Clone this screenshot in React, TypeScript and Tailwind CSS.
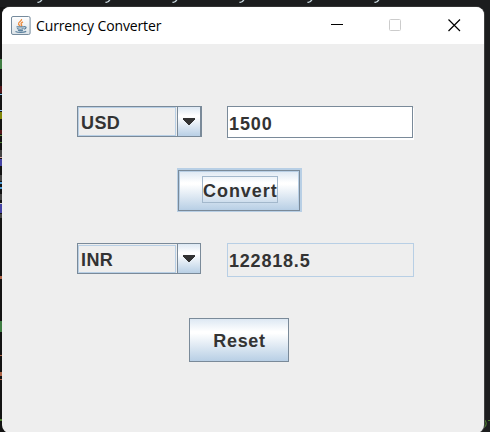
import React from "react";

const font = "font-['Liberation_Sans',Arial,sans-serif] font-bold text-[18px] leading-[20px] text-[#333333]";
const metal = "bg-[linear-gradient(180deg,#dde8f3_0%,#ffffff_30%,#ffffff_34%,#b8cfe5_100%)]";

function JavaIcon() {
  return (
    <svg width="20" height="20" viewBox="0 0 20 20" className="block">
      <defs>
        <linearGradient id="tile" x1="0" y1="0" x2="0" y2="1">
          <stop offset="0" stopColor="#ffffff" />
          <stop offset="1" stopColor="#dce3e8" />
        </linearGradient>
      </defs>
      <rect x="0.5" y="0.5" width="18.6" height="18" rx="1.5" fill="url(#tile)" stroke="#768b9d" />
      <path d="M10.5 3C11.5 5 7 6 7.5 8C7.8 9 9 9.5 9 10.3M12 5.8C9.5 7 9.8 8 10.6 8.8C11 9.3 10.5 10 10 10.4" fill="none" stroke="#ed8b3d" strokeWidth="1.3" />
      <path d="M5.5 10.8H13.2M6 12.5C7.5 13.3 11 13.3 12.6 12.5M7 14.2C8.5 14.8 10.5 14.8 12 14.2M13.2 10.7C16 10.4 15.4 12.8 13 13.2M4.5 15.4C7 16.8 12.5 16.8 15.2 15.4" fill="none" stroke="#5b819e" strokeWidth="1.2" />
    </svg>
  );
}

function Combo({ value, lower }: { value: string; lower?: boolean }) {
  return (
    <div className={`flex h-[31px] border border-[#7a8a99] ${lower ? "w-[124px]" : "w-[125px] border-r-2"}`}>
      <div className={`mr-px flex w-[98px] shrink-0 items-center border border-[#b8cfe5] pl-[2px] tracking-[0.4px] ${lower ? "mt-px pt-px" : "pt-[2px]"} ${font}`}>
        {value}
      </div>
      <div className={`flex flex-1 items-center justify-center border-l border-[#7a8a99] ${metal}`}>
        <svg width="12" height="7" viewBox="0 0 12 7" shapeRendering="crispEdges">
          <path d="M0 0H12V1L6.5 7H5.5L0 1Z" fill="#333333" />
        </svg>
      </div>
    </div>
  );
}

const edgeMarks = [
  [59, 10, "bg-[#3f7d43]"],
  [86, 7, "bg-[#541719]"],
  [94, 1, "bg-[#8ac4ec]"],
  [110, 1, "bg-[#8ac4ec]"],
  [112, 7, "bg-[#7f8508]"],
  [130, 4, "bg-[#541719]"],
  [135, 1, "bg-[#648d3c]"],
  [142, 1, "bg-[#4e7e32]"],
  [150, 7, "bg-[#444444]"],
  [157, 1, "bg-[#d5a0a0]"],
  [159, 7, "bg-[#4543a4]"],
  [175, 6, "bg-[#444444]"],
  [182, 2, "bg-[#4d9bd5]"],
  [187, 2, "bg-[#4d9bd5]"],
  [194, 6, "bg-[#444444]"],
  [203, 1, "bg-[#cccccc]"],
  [204, 9, "bg-[#4543a4]"],
  [214, 4, "bg-[#444444]"],
  [276, 3, "bg-[#ae6548]"],
  [321, 11, "bg-[#3f7d43]"],
  [355, 1, "bg-[#ae6548]"],
  [372, 4, "bg-[#ae6548]"],
  [379, 1, "bg-[#ae6548]"],
  [419, 2, "bg-[#4e7e32]"],
] as const;

// Descenders of the editor line that runs behind the window's top edge
const tails = [37, 105, 172, 239, 307, 374];

export default function App() {
  return (
    <div className="relative h-[432px] w-[490px] overflow-hidden bg-[#1c1d1e] pl-[2px] pt-[7px]">
      <div className="absolute left-0 top-[7px] h-[425px] w-[12px] bg-[#131313]" />
      {edgeMarks.map(([top, height, color]) => (
        <i key={top} className={`absolute left-0 w-[2px] ${color}`} style={{ top, height }} />
      ))}
      <svg className="absolute left-0 top-0" width="490" height="4">
        {tails.map((x) => (
          <path key={x} d={`M${x + 0.5} 2.3C${x + 3} 2.8 ${x + 4} 1.5 ${x + 5} -0.5`} fill="none" stroke="#c9d8df" strokeWidth="1.4" />
        ))}
      </svg>
      <svg className="absolute left-[484px] top-[418px]" width="6" height="12">
        <path d="M0 1.5C3 4 3 7 0 9.5M4 2.5H6" fill="none" stroke="#4e7e32" strokeWidth="1.2" />
      </svg>
      <div className="relative h-[426px] w-[482px] overflow-hidden rounded-[8px] bg-[#eeeeee] shadow-[1px_0_0_#3f4040,0_-1px_0_#333333]">
        <header className="flex h-[37px] items-center bg-white">
          <div className="ml-[9px]"><JavaIcon /></div>
          <h1 className="ml-[5px] w-[160px] whitespace-nowrap font-['Open_Sans','Noto_Sans',sans-serif] text-[14px] leading-[20px] tracking-[-0.13px] text-black">Currency Converter</h1>
          <svg className="ml-[135px]" width="130" height="13" viewBox="0 0 130 13">
            <path d="M0 5.5H12" stroke="#000" />
            <rect x="58.5" y="0.5" width="11" height="11" rx="1" fill="none" stroke="#cccccc" />
            <path d="M117.5 0.5L129 12M129 0.5L117.5 12" stroke="#000" strokeWidth="1.2" />
          </svg>
        </header>
        <main>
          <div className="flex h-[95px] items-start gap-[25px] pl-[75px] pt-[62px]">
            <Combo value="USD" />
            <div className={`flex h-[32px] w-[186px] items-center border border-[#7a8a99] bg-white pl-[1px] pt-[4px] tracking-[0.9px] shadow-[1px_2px_0_#ffffff] ${font}`}>1500</div>
          </div>
          <button className={`ml-[175px] mt-[29px] flex h-[44px] w-[125px] border border-[#b8cfe5] bg-[#b8cfe5] pt-[1px] ${font}`}>
            <span className={`flex h-[41px] w-[122px] justify-center border border-[#7a8a99] pt-[5px] ring-1 ring-inset ring-[#b8cfe5] ${metal}`}>
              <span className="ml-[2px] flex h-[27px] w-[76px] items-center border border-[#a3b8cc] pt-[3px] tracking-[0.95px]">Convert</span>
            </span>
          </button>
          <div className="flex items-start gap-[26px] pl-[75px] pt-[31px]">
            <Combo value="INR" lower />
            <div className={`flex h-[34px] w-[187px] items-center border border-[#b8cfe5] pl-[1px] pt-[2px] tracking-[0.8px] ${font}`}>122818.5</div>
          </div>
          <button className={`ml-[187px] mt-[41px] flex h-[44px] w-[100px] items-center justify-center border border-[#7a8a99] pl-px pt-[2px] tracking-[0.7px] ${metal} ${font}`}>Reset</button>
        </main>
      </div>
    </div>
  );
}
